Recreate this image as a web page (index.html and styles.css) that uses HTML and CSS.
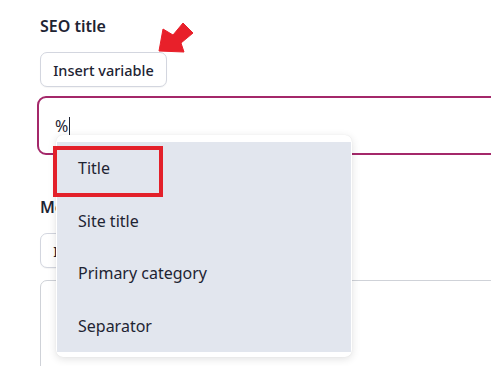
FILE: index.html
```html
<!DOCTYPE html>
<html lang="en">
<head>
<meta charset="utf-8">
<title>SEO title</title>
<link rel="stylesheet" href="styles.css">
</head>
<body>
<div class="form">
  <section class="field">
    <div class="field-label">SEO title</div>
    <button class="insert-btn" type="button">Insert variable</button>
    <div class="editor editor-focus"><span class="editor-text">%</span><span class="caret"></span></div>
    <svg class="pointer-arrow" width="48" height="40" viewBox="0 0 48 40">
      <polygon points="9,33 13,11 23,17 33,5 43,15 31,25 34,34" fill="#e8202a" stroke="#e8202a" stroke-width="1" stroke-linejoin="round"/>
    </svg>
    <div class="menu">
      <ul class="menu-list">
        <li class="menu-item">Title</li>
        <li class="menu-item">Site title</li>
        <li class="menu-item">Primary category</li>
        <li class="menu-item">Separator</li>
      </ul>
      <div class="mark-box"></div>
    </div>
  </section>
  <section class="field field-meta">
    <div class="field-label">Meta description</div>
    <button class="insert-btn" type="button">Insert variable</button>
    <div class="textarea"></div>
  </section>
</div>
</body>
</html>
```
FILE: styles.css
```css
html, body {
  margin: 0;
  padding: 0;
  background: #ffffff;
  overflow: hidden;
}
body {
  font-family: "Noto Sans", "Open Sans", sans-serif;
  color: #1e2433;
}
.form {
  width: 640px;
  padding: 16px 0 0 40px;
}
.field {
  position: relative;
  display: flex;
  flex-direction: column;
  align-items: flex-start;
}
.field-label {
  font-size: 16px;
  line-height: 20px;
  font-weight: 600;
  color: #1e2433;
}
.insert-btn {
  margin-top: 16px;
  height: 35px;
  width: 127px;
  padding: 0;
  box-sizing: border-box;
  border: 1px solid #d3d6df;
  border-radius: 7px;
  background: #ffffff;
  font-family: inherit;
  font-size: 14.5px;
  font-weight: 500;
  color: #1e2433;
  box-shadow: 0 1px 1px rgba(0,0,0,0.04);
}
.editor {
  margin-top: 9px;
  margin-left: -3px;
  width: 600px;
  height: 59px;
  box-sizing: border-box;
  border: 2.5px solid #a4286a;
  border-radius: 9px;
  display: flex;
  align-items: center;
  padding-left: 16px;
  font-size: 16px;
}
.caret {
  display: inline-block;
  width: 1px;
  height: 18px;
  background: #1e2433;
  margin-left: 1px;
}
.pointer-arrow {
  position: absolute;
  left: 110px;
  top: 2px;
}
.menu {
  position: absolute;
  left: 16px;
  top: 119px;
  width: 296px;
  box-sizing: border-box;
  padding: 7px 1px 5px 1px;
  background: #ffffff;
  border-radius: 7px;
  box-shadow: 0 2px 8px rgba(0,0,0,0.12), 0 0 1px rgba(0,0,0,0.1);
  z-index: 2;
}
.menu-list {
  list-style: none;
  margin: 0;
  padding: 0;
  background: #e2e6ee;
}
.menu-item {
  height: 52.5px;
  display: flex;
  align-items: center;
  padding-left: 21px;
  font-size: 16px;
  color: #1e2433;
}
.mark-box {
  position: absolute;
  left: -3px;
  top: 11px;
  width: 110px;
  height: 51px;
  box-sizing: border-box;
  border: 4px solid #e3202a;
}
.field-meta {
  margin-top: 42px;
}
.textarea {
  margin-top: 12px;
  width: 600px;
  height: 120px;
  box-sizing: border-box;
  border: 1px solid #cfd2d8;
  border-radius: 7px;
}
```
